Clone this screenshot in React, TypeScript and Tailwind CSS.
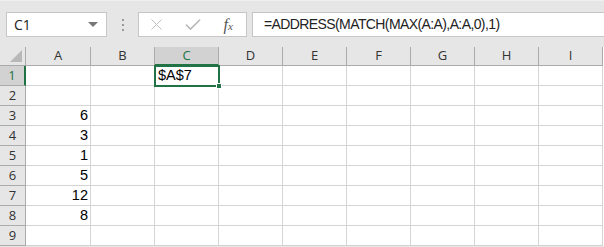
import { Check, X } from "lucide-react";

const cols = ["A", "B", "C", "D", "E", "F", "G", "H", "I"];
const values: Record<number, string> = { 3: "6", 4: "3", 5: "1", 6: "5", 7: "12", 8: "8" };
const rows = [1, 2, 3, 4, 5, 6, 7, 8, 9];

const App = () => {
  return (
    <div className="w-[604px] h-[247px] overflow-hidden bg-[#e6e6e6] font-['Open_Sans','Liberation_Sans',sans-serif] text-[#222]">
      {/* Formula bar */}
      <div className="h-[47px] flex items-start pt-[11px] pl-[6px] border-t border-[#f0f0f0]">
        <div className="w-[101px] h-[25px] bg-white border border-[#c6c6c6] flex items-center justify-between pl-[7px] pr-[8px] text-[14px]">
          <span>C1</span>
          <span className="w-0 h-0 border-l-[5px] border-r-[5px] border-t-[5px] border-l-transparent border-r-transparent border-t-[#777]" />
        </div>
        <div className="w-[31px] h-[25px] flex flex-col items-center justify-center gap-[3px]">
          <span className="w-[2px] h-[2px] bg-[#9a9a9a]" />
          <span className="w-[2px] h-[2px] bg-[#9a9a9a]" />
          <span className="w-[2px] h-[2px] bg-[#9a9a9a]" />
        </div>
        <div className="w-[109px] h-[25px] bg-white border border-[#c6c6c6] flex items-center">
          <div className="w-[36px] flex justify-center text-[#bdbdbd]"><X size={19} strokeWidth={1.2} /></div>
          <div className="w-[36px] flex justify-center text-[#b8b8b8]"><Check size={20} strokeWidth={1.9} /></div>
          <div className="w-[36px] flex justify-center items-baseline text-[#555] italic font-['Liberation_Serif',serif]">
            <span className="text-[16px]">f</span>
            <span className="text-[11px]">x</span>
          </div>
        </div>
        <div className="ml-[5px] flex-1 h-[25px] bg-white border border-r-0 border-[#c6c6c6] flex items-center pl-[11px] text-[14px] tracking-[-0.6px] font-['Liberation_Sans',sans-serif] text-[#222]">
          =ADDRESS(MATCH(MAX(A:A),A:A,0),1)
        </div>
      </div>

      {/* Grid */}
      <div className="grid grid-cols-[26px_65px_repeat(8,64px)] bg-white">
        <div className="h-[19px] bg-[#e6e6e6] border-r border-b border-[#ababab] flex items-end justify-end pr-[3px] pb-[3px]">
          <svg width="12" height="12" viewBox="0 0 12 12">
            <path d="M12 0 L12 12 L0 12 Z" fill="#b8b8b8" />
          </svg>
        </div>
        {cols.map((c) => (
          <div
            key={c}
            className={
              c === "C"
                ? "h-[19px] bg-[#d2d2d2] border-r border-[#ababab] border-b-2 border-b-[#217346] flex items-center justify-center text-[13px] text-[#217346]"
                : "h-[19px] bg-[#e6e6e6] border-r border-b border-[#ababab] flex items-center justify-center text-[13px] text-[#333]"
            }
          >
            {c}
          </div>
        ))}
        {rows.map((r) => (
          <>
            <div
              key={"h" + r}
              className={
                r === 1
                  ? "h-[20px] bg-[#d2d2d2] border-b border-[#ababab] border-r-2 border-r-[#217346] flex items-center justify-center text-[13px] text-[#217346]"
                  : "h-[20px] bg-[#e6e6e6] border-r border-b border-[#ababab] flex items-center justify-center text-[13px] text-[#333]"
              }
            >
              {r}
            </div>
            {cols.map((c) => (
              <div
                key={c + r}
                className={
                  c === "C" && r === 1
                    ? "h-[20px] border-r border-b border-[#d4d4d4] relative font-['Liberation_Sans',sans-serif] text-[14.5px] text-black"
                    : "h-[20px] border-r border-b border-[#d4d4d4] flex items-center justify-end pr-[2px] font-['Liberation_Sans',sans-serif] text-[14.5px] text-black"
                }
              >
                {c === "A" && values[r]}
                {c === "C" && r === 1 && (
                  <div className="absolute left-[-1px] top-[-1px] w-[66px] h-[22px] border-2 border-[#217346] flex items-center pl-[2px] z-10">
                    $A$7
                    <span className="absolute right-[-4px] bottom-[-4px] w-[6px] h-[6px] bg-[#217346] border border-white" />
                  </div>
                )}
              </div>
            ))}
          </>
        ))}
      </div>
    </div>
  );
};

export default App;
